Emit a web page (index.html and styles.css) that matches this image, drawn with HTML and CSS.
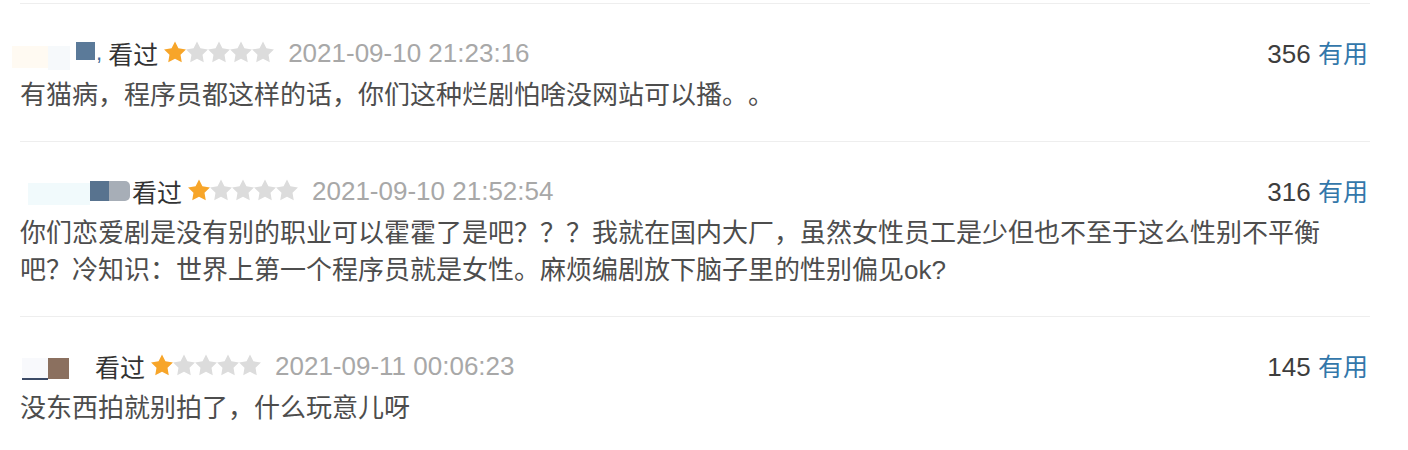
FILE: index.html
```html
<!DOCTYPE html>
<html lang="zh-CN">
<head>
<meta charset="utf-8">
<title>短评</title>
<link rel="stylesheet" href="styles.css">
</head>
<body>
<div class="comments">
  <div class="item">
    <div class="head">
      <div class="info">
        <span class="uname u1"><i class="b b1"></i><i class="b b2"></i><i class="b b3"></i><span class="comma">,</span></span>
        <span class="seen">看过</span>
        <span class="stars"><svg viewBox="0 0 110 22" width="110" height="22"><use href="#s" x="0" class="on"/><use href="#s" x="22"/><use href="#s" x="44"/><use href="#s" x="66"/><use href="#s" x="88"/></svg></span>
        <span class="time">2021-09-10 21:23:16</span>
      </div>
      <div class="votes"><span class="num">356</span> <span class="useful">有用</span></div>
    </div>
    <p class="text">有猫病，程序员都这样的话，你们这种烂剧怕啥没网站可以播。。</p>
  </div>
  <div class="item">
    <div class="head">
      <div class="info">
        <span class="uname u2"><i class="b b1"></i><i class="b b2"></i><i class="b b3"></i></span>
        <span class="seen">看过</span>
        <span class="stars"><svg viewBox="0 0 110 22" width="110" height="22"><use href="#s" x="0" class="on"/><use href="#s" x="22"/><use href="#s" x="44"/><use href="#s" x="66"/><use href="#s" x="88"/></svg></span>
        <span class="time">2021-09-10 21:52:54</span>
      </div>
      <div class="votes"><span class="num">316</span> <span class="useful">有用</span></div>
    </div>
    <p class="text">你们恋爱剧是没有别的职业可以霍霍了是吧？？？我就在国内大厂，虽然女性员工是少但也不至于这么性别不平衡吧？冷知识：世界上第一个程序员就是女性。麻烦编剧放下脑子里的性别偏见ok?</p>
  </div>
  <div class="item">
    <div class="head">
      <div class="info">
        <span class="uname u3"><i class="b b1"></i><i class="b b2"></i></span>
        <span class="seen">看过</span>
        <span class="stars"><svg viewBox="0 0 110 22" width="110" height="22"><use href="#s" x="0" class="on"/><use href="#s" x="22"/><use href="#s" x="44"/><use href="#s" x="66"/><use href="#s" x="88"/></svg></span>
        <span class="time">2021-09-11 00:06:23</span>
      </div>
      <div class="votes"><span class="num">145</span> <span class="useful">有用</span></div>
    </div>
    <p class="text">没东西拍就别拍了，什么玩意儿呀</p>
  </div>
</div>
<svg class="defs" width="0" height="0">
  <defs>
    <path id="s" d="M11 0.5L14.41 7.31L21.94 8.45L16.52 13.79L17.76 21.3L11 17.8L4.24 21.3L5.48 13.79L0.06 8.45L7.59 7.31Z"/>
  </defs>
</svg>
</body>
</html>
```

FILE: styles.css
```css
html, body {
  margin: 0;
  padding: 0;
  background: #fff;
}

body {
  font-family: "Liberation Sans", "Noto Sans CJK SC", sans-serif;
  color: #494949;
  text-spacing-trim: space-all;
}

.defs {
  position: absolute;
  width: 0;
  height: 0;
}

.comments {
  width: 1350px;
  padding: 3px 0 0 20px;
}

.item {
  border-top: 1px solid #eeeeee;
  padding: 34px 0 27px;
}

.head {
  display: flex;
  align-items: center;
  justify-content: space-between;
  height: 30px;
  font-size: 26px;
  line-height: 30px;
}

.info {
  display: flex;
  align-items: center;
}

.uname {
  display: flex;
  align-items: center;
  height: 30px;
}

.b {
  display: block;
}

.u1 { margin-left: -8px; }
.u1 .b1 { width: 36px; height: 22px; background: #fffaf2; margin-top: 8px; }
.u1 .b2 { width: 22px; height: 24px; background: #f6f9fb; margin-top: 10px; margin-right: 6px; }
.u1 .b3 { width: 19px; height: 18px; background: #5b7a99; margin-top: -4px; }
.u1 .comma { color: #3d6c99; font-size: 22px; margin: 0 6px 0 1px; }

.u2 { margin-left: 8px; }
.u2 .b1 { width: 62px; height: 22px; background: #f1fafc; margin-top: 6px; }
.u2 .b2 { width: 19px; height: 20px; background: #58738f; }
.u2 .b3 { width: 21px; height: 20px; background: #a7aeb7; border-radius: 0 5px 5px 0; margin-right: 2px; }

.u3 { margin-left: 2px; }
.u3 .b1 { width: 26px; height: 20px; background: #f8f9fc; margin-top: 6px; border-bottom: 2px solid #3b4a66; }
.u3 .b2 { width: 21px; height: 21px; background: #8b705f; margin-top: 4px; margin-right: 26px; }

.seen {
  color: #333;
  font-family: "Noto Sans CJK SC", sans-serif;
  font-size: 25px;
}

.stars {
  display: flex;
  margin-left: 6px;
  margin-top: -2px;
}

.stars svg use {
  fill: #dcdcdc;
}

.stars svg use.on {
  fill: #f7a529;
}

.time {
  color: #a8a8a8;
  margin-left: 14px;
}

.votes {
  color: #3d3d3d;
  margin-right: 2px;
}

.useful {
  color: #3377aa;
  font-family: "Noto Sans CJK SC", sans-serif;
  font-size: 25px;
}

.text {
  margin: 9px 0 0;
  padding-right: 20px;
  font-family: "Liberation Sans", "Noto Sans CJK SC", sans-serif;
  font-size: 26px;
  line-height: 37px;
  color: #4d4d4d;
}
```
